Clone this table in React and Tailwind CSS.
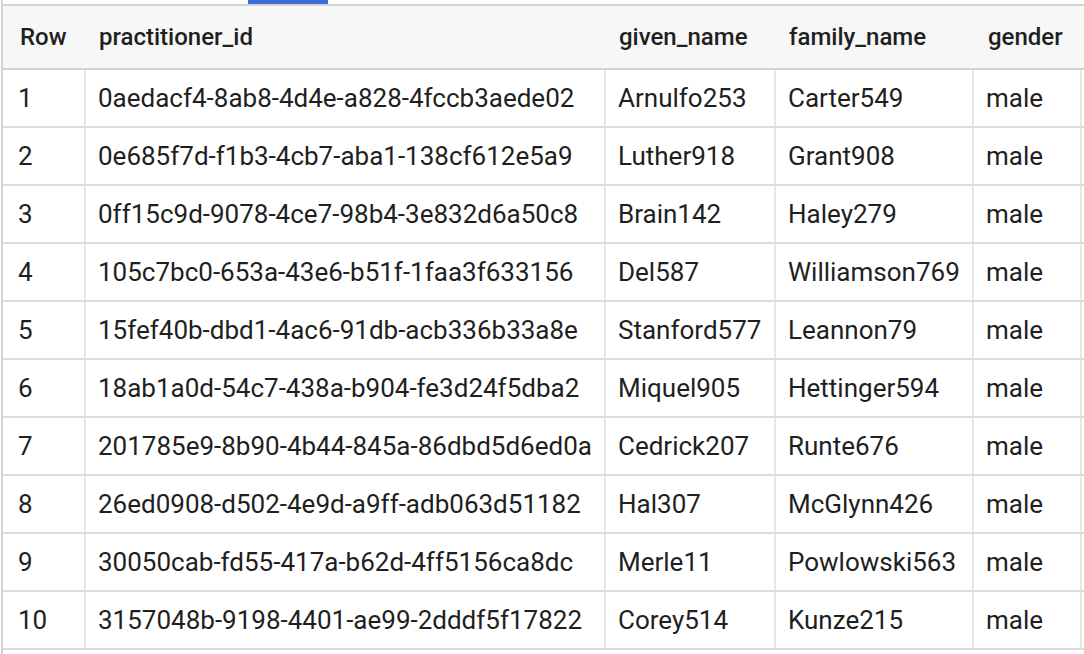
import React from "react";

const rows = [
  ["1", "0aedacf4-8ab8-4d4e-a828-4fccb3aede02", "Arnulfo253", "Carter549", "male"],
  ["2", "0e685f7d-f1b3-4cb7-aba1-138cf612e5a9", "Luther918", "Grant908", "male"],
  ["3", "0ff15c9d-9078-4ce7-98b4-3e832d6a50c8", "Brain142", "Haley279", "male"],
  ["4", "105c7bc0-653a-43e6-b51f-1faa3f633156", "Del587", "Williamson769", "male"],
  ["5", "15fef40b-dbd1-4ac6-91db-acb336b33a8e", "Stanford577", "Leannon79", "male"],
  ["6", "18ab1a0d-54c7-438a-b904-fe3d24f5dba2", "Miquel905", "Hettinger594", "male"],
  ["7", "201785e9-8b90-4b44-845a-86dbd5d6ed0a", "Cedrick207", "Runte676", "male"],
  ["8", "26ed0908-d502-4e9d-a9ff-adb063d51182", "Hal307", "McGlynn426", "male"],
  ["9", "30050cab-fd55-417a-b62d-4ff5156ca8dc", "Merle11", "Powlowski563", "male"],
  ["10", "3157048b-9198-4401-ae99-2dddf5f17822", "Corey514", "Kunze215", "male"],
];

const widths = ["w-[83px]", "w-[520px]", "w-[170px]", "w-[198px]", "w-[108px]"];
const pads = ["pl-[15px]", "pl-[12px]", "pl-[12px]", "pl-[12px]", "pl-[12px]"];
const hpads = ["pl-[17px]", "pl-[13px]", "pl-[13px]", "pl-[13px]", "pl-[14px]"];
const headers = ["Row", "practitioner_id", "given_name", "family_name", "gender"];

export default function App() {
  return (
    <div
      className="w-[1084px] h-[654px] bg-white overflow-hidden text-[#1f1f1f]"
      style={{ fontFamily: "Roboto, 'Liberation Sans', sans-serif" }}
    >
      <div className="ml-[1px] h-full border-l-2 border-[#d4d4d4] flex flex-col">
        <div className="h-[4px] flex">
          <div className="w-[245px]" />
          <div className="w-[80px] h-[4px] bg-[#3d6ed6]" />
        </div>
        <div className="border-t-2 border-[#d4d4d4]">
          <div className="flex h-[64px] bg-[#f7f7f7] border-b-2 border-[#d2d2d2]">
            {headers.map((h, i) => (
              <div
                key={h}
                className={`${widths[i]} ${hpads[i]} flex items-center text-[24px] font-medium shrink-0 whitespace-nowrap`}
              >
                {h}
              </div>
            ))}
          </div>
          {rows.map((r) => (
            <div key={r[0]} className="flex h-[58px] border-b-2 border-[#dcdcdc]">
              {r.map((c, i) => (
                <div
                  key={i}
                  className={`${widths[i]} ${pads[i]} flex items-center text-[26px] shrink-0 border-r-2 border-[#e8e8e8] whitespace-nowrap`}
                >
                  {c}
                </div>
              ))}
            </div>
          ))}
        </div>
      </div>
    </div>
  );
}
